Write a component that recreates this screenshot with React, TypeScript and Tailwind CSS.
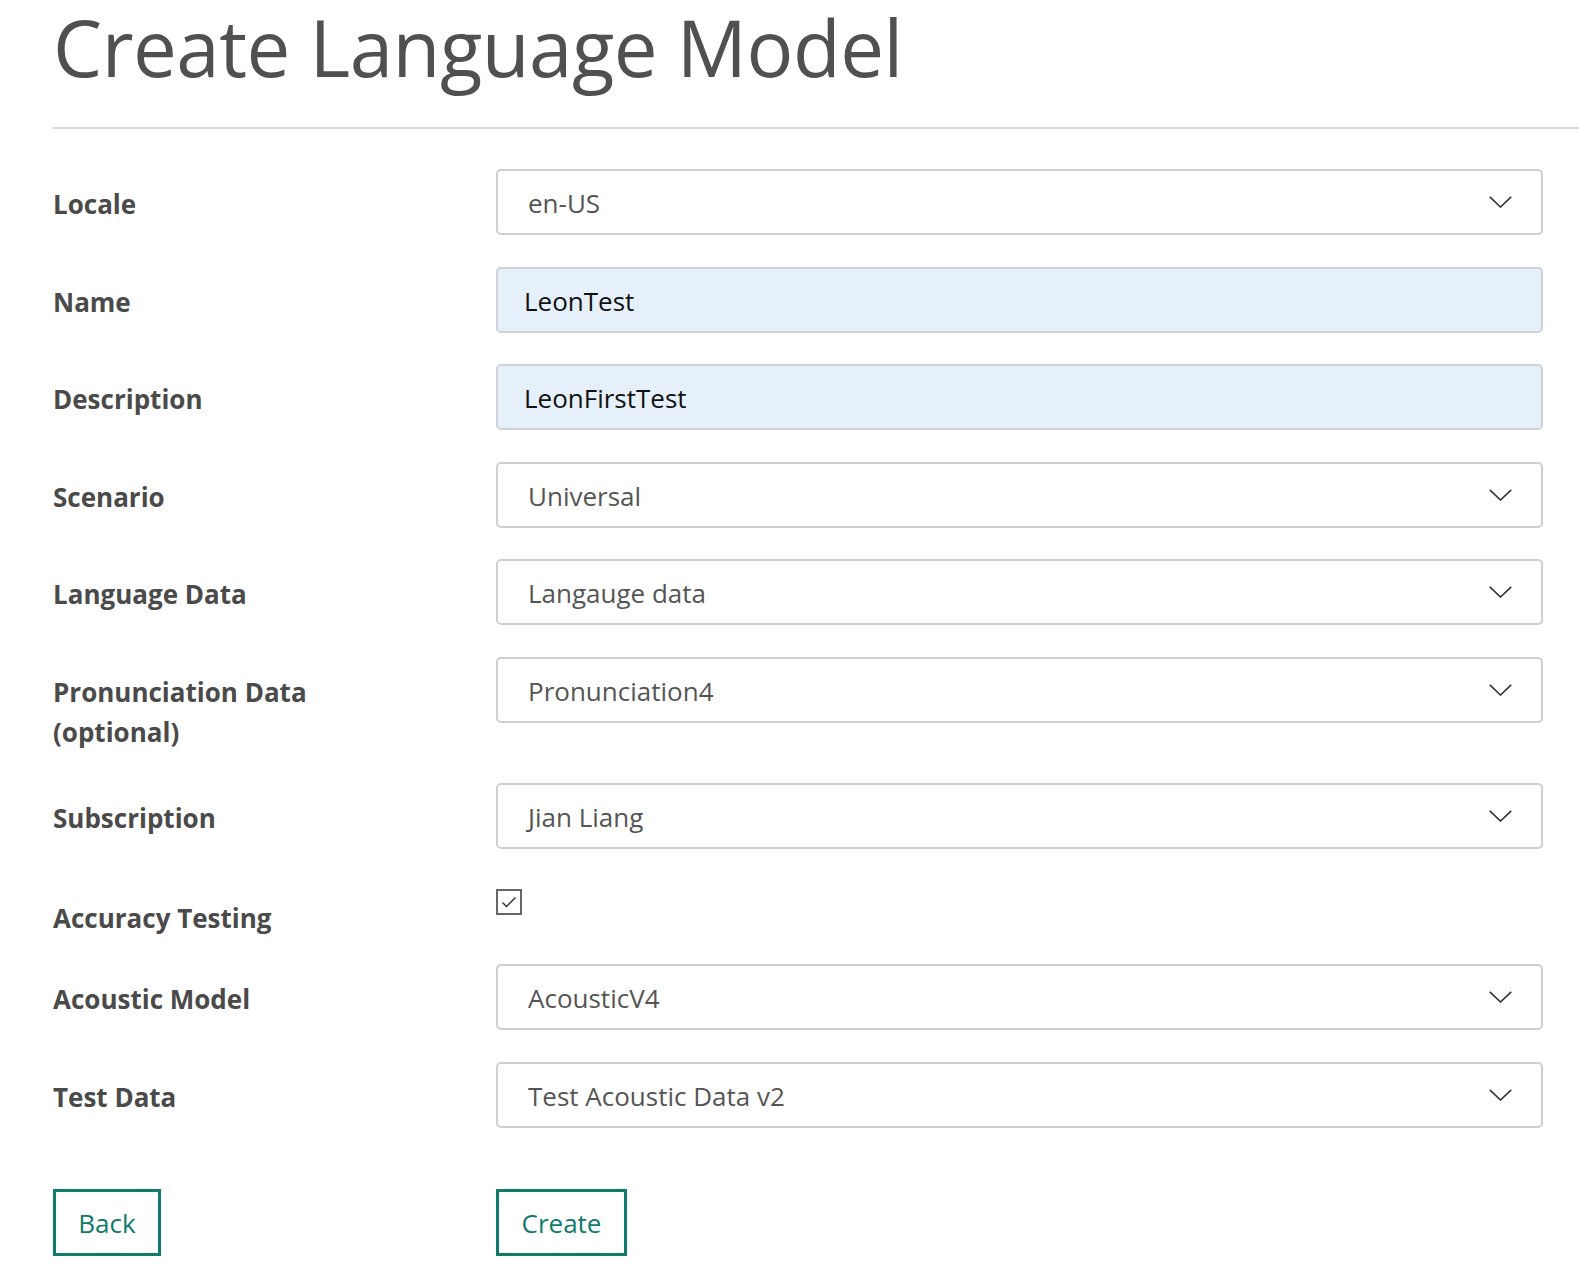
import React from 'react'

const FONT = { fontFamily: '"Open Sans", "Noto Sans", sans-serif' }

const Chevron = () => (
  <svg width="23" height="12" viewBox="0 0 23 12" fill="none" className="shrink-0">
    <path d="M0.8 0.8 L11.5 11 L22.2 0.8" stroke="#333" strokeWidth="1.6" />
  </svg>
)

function SelectBox({ value }: { value: string }) {
  return (
    <div className="flex h-[66px] flex-1 items-center justify-between rounded-[5px] border-2 border-[#cfcfcf] bg-white pl-[30px] pr-[29px]">
      <span className="pt-[3px] text-[26px] text-[#555]">{value}</span>
      <Chevron />
    </div>
  )
}

function TextBox({ value }: { value: string }) {
  return (
    <div className="flex h-[66px] flex-1 items-center rounded-[5px] border-2 border-[#cfd3d6] bg-[#e5f0fa] pl-[26px]">
      <span className="pt-[3px] text-[26px] text-[#111]">{value}</span>
    </div>
  )
}

function Row({ label, children, last }: { label: React.ReactNode; children: React.ReactNode; last?: boolean }) {
  return (
    <div className={'flex items-start ' + (last ? '' : 'mb-[31.5px]')}>
      <div className="w-[443px] shrink-0 pt-[15px] text-[26px] font-bold leading-[40px] text-[#4a4a4a]">
        {label}
      </div>
      {children}
    </div>
  )
}

export default function App() {
  return (
    <div className="min-h-screen bg-white pl-[53px]" style={FONT}>
      <h1 className="-mt-[6px] text-[78px] leading-[106px] tracking-[-0.5px] text-[#505050]">
        Create Language Model
      </h1>
      <div className="mt-[27px] h-[2px] bg-[#d6d6d6]" />

      <div className="mt-[40px] pr-[36px]">
        <Row label="Locale">
          <SelectBox value="en-US" />
        </Row>
        <Row label="Name">
          <TextBox value="LeonTest" />
        </Row>
        <Row label="Description">
          <TextBox value="LeonFirstTest" />
        </Row>
        <Row label="Scenario">
          <SelectBox value="Universal" />
        </Row>
        <Row label="Language Data">
          <SelectBox value="Langauge data" />
        </Row>
        <Row label={<>Pronunciation Data<br />(optional)</>}>
          <SelectBox value="Pronunciation4" />
        </Row>
        <Row label="Subscription">
          <SelectBox value="Jian Liang" />
        </Row>

        <div className="mb-[31.5px] flex h-[52px] items-start">
          <div className="w-[443px] shrink-0 pt-[17px] text-[26px] font-bold leading-[40px] text-[#4a4a4a]">
            Accuracy Testing
          </div>
          <div className="mt-[8px] flex h-[26px] w-[26px] items-center justify-center border-2 border-[#666] bg-white">
            <svg width="16" height="12" viewBox="0 0 16 12" fill="none">
              <path d="M1.5 6.5 L5.5 10.5 L14.5 1.5" stroke="#333" strokeWidth="1.4" />
            </svg>
          </div>
        </div>

        <Row label="Acoustic Model">
          <SelectBox value="AcousticV4" />
        </Row>
        <Row label="Test Data" last>
          <SelectBox value="Test Acoustic Data v2" />
        </Row>

        <div className="mt-[61px] flex items-start">
          <div className="w-[443px] shrink-0">
            <button className="h-[67px] w-[108px] border-[3px] border-[#0f7b6c] bg-white pt-[2px] text-[26px] text-[#0f7b6c]">
              Back
            </button>
          </div>
          <button className="h-[67px] w-[131px] border-[3px] border-[#0f7b6c] bg-white pt-[2px] text-[26px] text-[#0f7b6c]">
            Create
          </button>
        </div>
      </div>
    </div>
  )
}
